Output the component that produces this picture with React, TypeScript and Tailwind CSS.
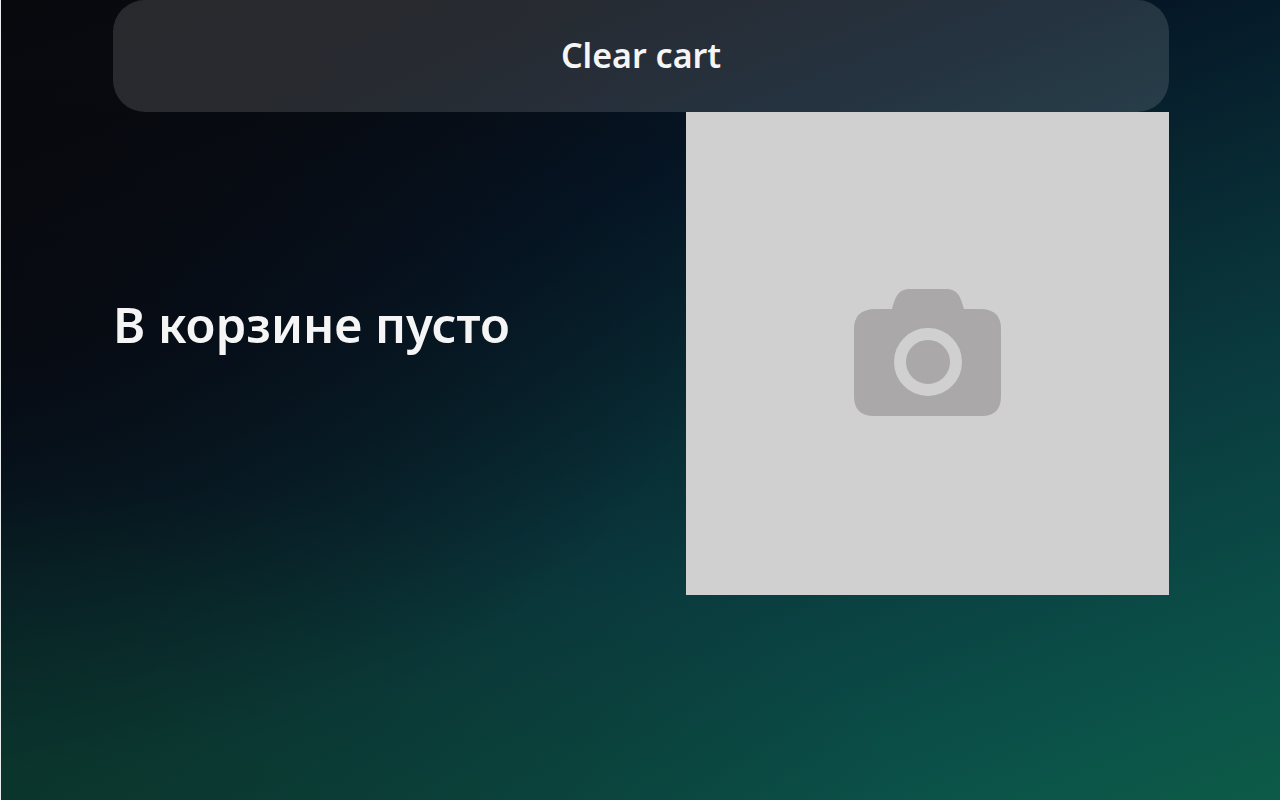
export default function App() {
  return (
    <div className="min-h-screen border-l border-[#e8eeee] bg-[radial-gradient(ellipse_70%_40%_at_0%_100%,rgba(12,52,30,0.55),rgba(12,52,30,0)),radial-gradient(ellipse_56%_60%_at_0%_36%,rgba(8,9,14,0.8)_0%,rgba(8,9,14,0.4)_50%,rgba(8,9,14,0)_100%),linear-gradient(159deg,#08090d_0%,#070b13_17%,#051525_33%,#07242f_46%,#0a3a3e_65%,#0b5249_89%,#0d5b47_100%)] pl-28 pr-[111px] font-['Noto_Sans',sans-serif] text-[#f5f5f5]">
      <button
        type="button"
        className="flex h-28 w-full items-center justify-center rounded-[32px] bg-white/13 pb-0.5 text-[34px] font-semibold"
      >
        Clear cart
      </button>
      <main className="flex items-center justify-between">
        <h1 className="mb-[60px] text-[49px] leading-[56px] font-semibold">В корзине пусто</h1>
        <svg
          viewBox="0 0 483 483"
          role="img"
          aria-label="Фото"
          className="aspect-square w-[483px] max-w-[46%] bg-[#d0d0d0]"
        >
          <path
            fill="#aaa8a9"
            d="M188 197H206C209 187 211 177 224 177H260C273 177 275 187 278 197H296Q315 198 315 217V284Q315 304 296 304H188Q168 304 168 284V217Q168 198 188 197Z"
          />
          <circle cx="242" cy="250" r="28" fill="none" stroke="#d0d0d0" strokeWidth="12" />
        </svg>
      </main>
    </div>
  );
}
